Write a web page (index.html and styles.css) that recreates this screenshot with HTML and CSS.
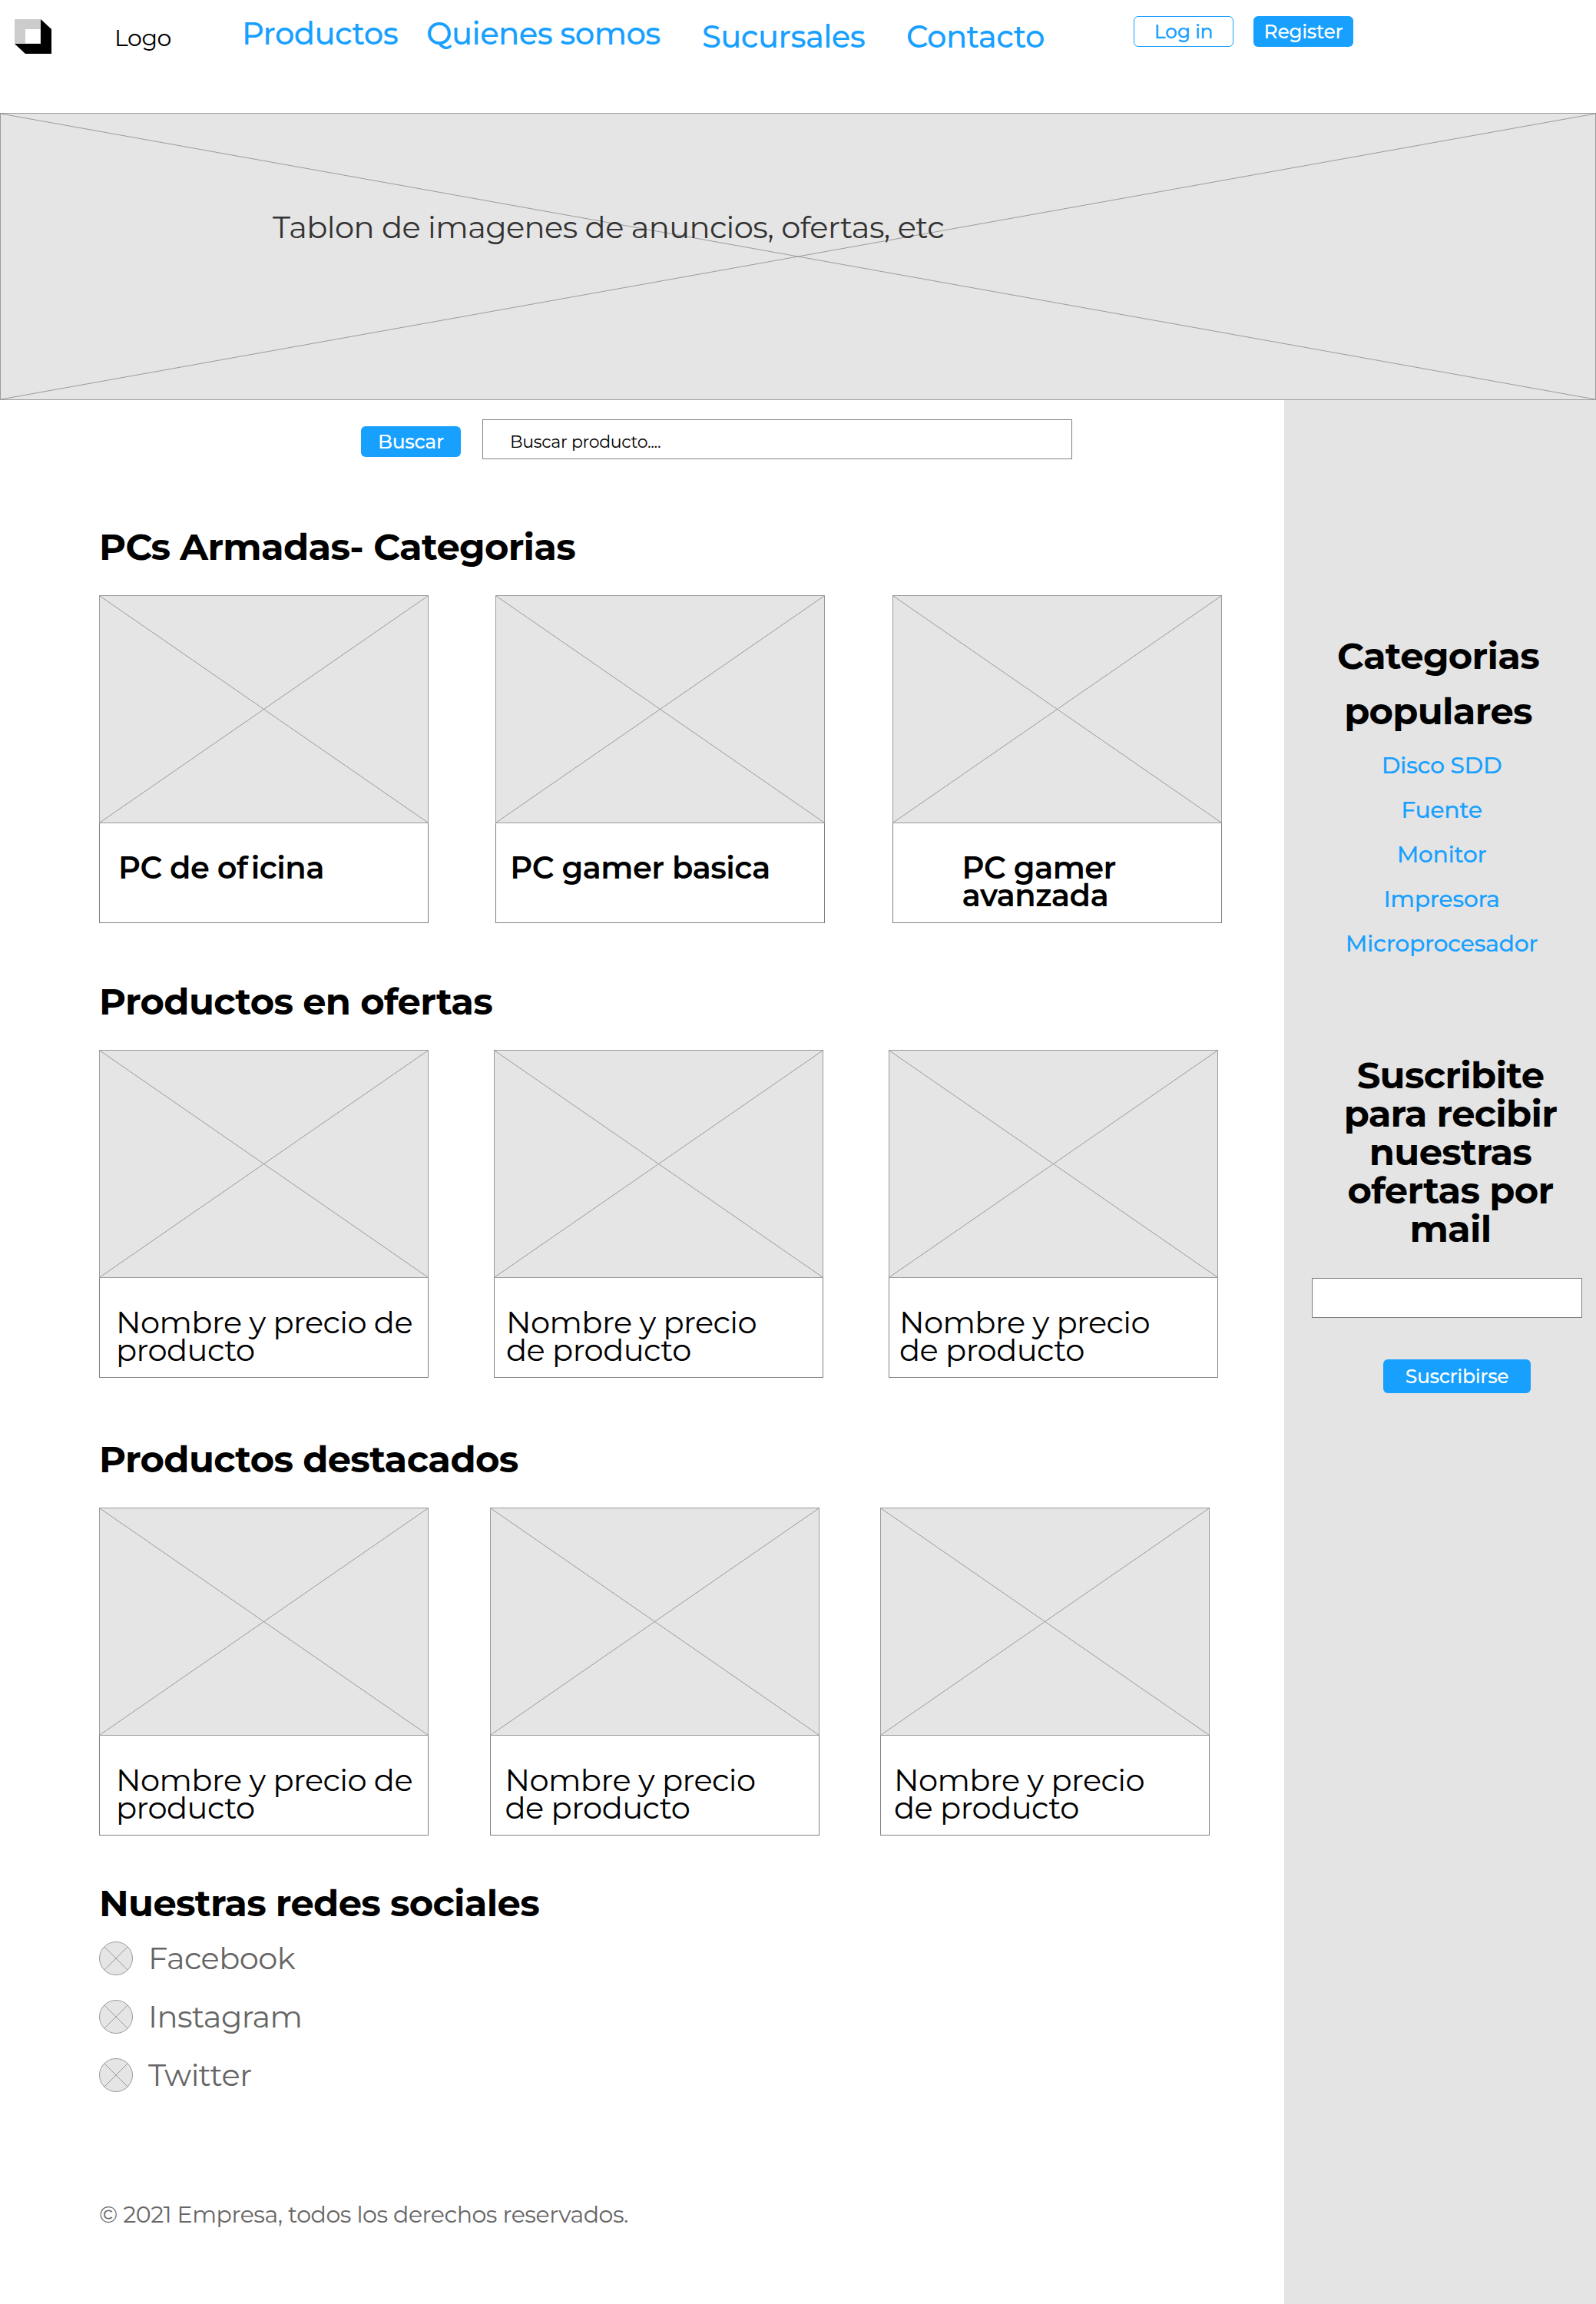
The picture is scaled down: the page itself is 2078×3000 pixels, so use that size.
FILE: index.html
```html
<!DOCTYPE html>
<html lang="es">
<head>
<meta charset="utf-8">
<title>Empresa</title>
<link rel="stylesheet" href="styles.css">
</head>
<body>
<svg class="defs" width="0" height="0" aria-hidden="true">
  <symbol id="cross" viewBox="0 0 100 100" preserveAspectRatio="none">
    <path d="M0 0L100 100M100 0L0 100" vector-effect="non-scaling-stroke"/>
  </symbol>
</svg>

<header class="header">
  <svg class="logo" viewBox="0 0 48 45" aria-hidden="true">
    <path fill="#000" d="M34 0L48 13V45H14L0 32H34Z"/>
    <path fill="#ccc" d="M0 0H34V32H0Z"/>
    <path fill="#fff" d="M14 13H33.5V31.5H14Z"/>
  </svg>
  <span class="brand">Logo</span>
  <nav class="nav">
    <a class="nav-link" href="#">Productos</a>
    <a class="nav-link" href="#">Quienes somos</a>
    <a class="nav-link nav-low" href="#">Sucursales</a>
    <a class="nav-link nav-low" href="#">Contacto</a>
  </nav>
  <a class="btn btn-outline" href="#">Log in</a>
  <a class="btn btn-register" href="#">Register</a>
</header>

<section class="banner">
  <svg class="cross"><use href="#cross"/></svg>
  <p class="banner-text">Tablon de imagenes de anuncios, ofertas, etc</p>
</section>

<div class="page">
  <main class="main">
    <form class="search">
      <button class="btn btn-search" type="button">Buscar</button>
      <div class="search-field">Buscar producto....</div>
    </form>

    <section class="section section-pcs">
      <h2 class="heading">PCs Armadas- Categorias</h2>
      <div class="cards">
        <article class="card"><svg class="card-img"><use href="#cross"/></svg><p class="caption strong">PC de o<span class="loose">f</span>icina</p></article>
        <article class="card"><svg class="card-img"><use href="#cross"/></svg><p class="caption strong">PC gamer basica</p></article>
        <article class="card"><svg class="card-img"><use href="#cross"/></svg><p class="caption strong">PC gamer<br>avanzada</p></article>
      </div>
    </section>

    <section class="section section-offers">
      <h2 class="heading">Productos en ofertas</h2>
      <div class="cards">
        <article class="card"><svg class="card-img"><use href="#cross"/></svg><p class="caption">Nombre y precio de<br>producto</p></article>
        <article class="card"><svg class="card-img"><use href="#cross"/></svg><p class="caption">Nombre y precio<br>de producto</p></article>
        <article class="card"><svg class="card-img"><use href="#cross"/></svg><p class="caption">Nombre y precio<br>de producto</p></article>
      </div>
    </section>

    <section class="section section-featured">
      <h2 class="heading">Productos destacados</h2>
      <div class="cards">
        <article class="card"><svg class="card-img"><use href="#cross"/></svg><p class="caption">Nombre y precio de<br>producto</p></article>
        <article class="card"><svg class="card-img"><use href="#cross"/></svg><p class="caption">Nombre y precio<br>de producto</p></article>
        <article class="card"><svg class="card-img"><use href="#cross"/></svg><p class="caption">Nombre y precio<br>de producto</p></article>
      </div>
    </section>

    <section class="section section-social">
      <h2 class="heading">Nuestras redes sociales</h2>
      <ul class="social">
        <li class="social-item">
          <svg class="social-icon" viewBox="0 0 44 44"><circle cx="22" cy="22" r="21.5"/><path d="M6.8 6.8L37.2 37.2M37.2 6.8L6.8 37.2"/></svg>
          <span>Facebook</span>
        </li>
        <li class="social-item">
          <svg class="social-icon" viewBox="0 0 44 44"><circle cx="22" cy="22" r="21.5"/><path d="M6.8 6.8L37.2 37.2M37.2 6.8L6.8 37.2"/></svg>
          <span>Instagram</span>
        </li>
        <li class="social-item">
          <svg class="social-icon" viewBox="0 0 44 44"><circle cx="22" cy="22" r="21.5"/><path d="M6.8 6.8L37.2 37.2M37.2 6.8L6.8 37.2"/></svg>
          <span>Twitter</span>
        </li>
      </ul>
    </section>

    <footer class="footer">© 2021 Empresa, todos los derechos reservados.</footer>
  </main>

  <aside class="sidebar">
    <h2 class="side-title">Categorias<br>populares</h2>
    <ul class="side-links">
      <li><a class="side-link" href="#">Disco SDD</a></li>
      <li><a class="side-link" href="#">Fuente</a></li>
      <li><a class="side-link" href="#">Monitor</a></li>
      <li><a class="side-link" href="#">Impresora</a></li>
      <li><a class="side-link" href="#">Microprocesador</a></li>
    </ul>
    <h2 class="subscribe-title">Suscribite<br>para recibir<br>nuestras<br>ofertas por<br>mail</h2>
    <input class="subscribe-input" type="text" aria-label="Mail">
    <button class="btn btn-subscribe" type="button">Suscribirse</button>
  </aside>
</div>
</body>
</html>
```
FILE: styles.css
```css
* {
  box-sizing: border-box;
  letter-spacing: -.014em;
}

body {
  margin: 0;
  width: 2078px;
  background: #fff;
  color: #000;
  font-family: Montserrat, Inter, "Open Sans", sans-serif;
  font-variant-ligatures: none;
}

h2, p, ul { margin: 0; padding: 0; }
ul { list-style: none; }
a { text-decoration: none; }

.defs { display: block; }

/* Header */
.header {
  display: flex;
  align-items: flex-start;
  height: 147px;
  padding-left: 19px;
}
.logo { width: 48px; height: 45px; margin-top: 25px; }
.brand {
  width: 166px;
  margin: 35px 0 0 82px;
  font-size: 30px;
  line-height: 30px;
}
.nav {
  display: grid;
  grid-template-columns: 240px 359px 266px 296px;
  align-items: start;
}
.nav-link {
  color: #18a0ff;
  font-size: 40px;
  font-weight: 500;
  line-height: 40px;
  margin-top: 24px;
}
.nav-low { margin-top: 27.5px; }

.btn {
  display: flex;
  align-items: center;
  justify-content: center;
  width: 130px;
  height: 40px;
  padding: 0;
  border: 0;
  border-radius: 6px;
  background: #18a0ff;
  color: #fff;
  font-family: inherit;
  font-size: 25px;
  font-weight: 500;
  line-height: 36px;
}
.btn-outline {
  margin-top: 21px;
  border: 1px solid #18a0ff;
  background: #fff;
  color: #18a0ff;
}
.btn-register { margin: 21px 0 0 26px; }

/* Banner */
.banner {
  display: grid;
  height: 374px;
  border: 1px solid #9b9b9b;
  background: #e5e5e5;
}
.cross, .banner-text { grid-area: 1 / 1; }
.cross { width: 100%; height: 372px; stroke: #9b9b9b; }
.banner-text {
  padding: 128px 0 0 354px;
  color: #333;
  font-size: 40px;
  line-height: 40px;
}

.page { display: flex; height: 2479px; }
.main { width: 1672px; padding: 25px 0 0 129px; }

/* Search */
.search {
  display: flex;
  gap: 28px;
  margin-left: 341px;
}
.btn-search { margin-top: 9px; }
.search-field {
  width: 768px;
  height: 52px;
  padding-left: 35px;
  border: 1px solid #808080;
  font-size: 22px;
  line-height: 58px;
}

/* Product sections */
.section-pcs { margin-top: 84px; }
.section-offers { margin-top: 72px; }
.section-featured { margin-top: 76px; }
.section-social { margin-top: 58px; }

.heading {
  font-size: 48px;
  font-weight: 700;
  line-height: 60px;
}

.cards { display: flex; margin-top: 33px; }
.section-pcs .cards { gap: 87.3px; }
.section-offers .cards { gap: 85px; }
.section-featured .cards { gap: 79.5px; }

.card { width: 429px; flex: none; }
.card-img {
  display: block;
  width: 429px;
  height: 297px;
  border: 1px solid #9b9b9b;
  background: #e5e5e5;
  stroke: #9b9b9b;
}
.caption {
  height: 130px;
  padding-top: 40px;
  border: 1px solid #808080;
  border-top: 0;
  font-size: 40px;
  line-height: 36px;
  white-space: nowrap;
}
.caption.strong { font-weight: 600; }
.loose { letter-spacing: 4px; }

.section-pcs .card:nth-child(1) .caption { padding-left: 24px; }
.section-pcs .card:nth-child(2) .caption { padding-left: 18px; }
.section-pcs .card:nth-child(3) .caption { padding-left: 90px; }
.section-offers .card:nth-child(1) .caption,
.section-featured .card:nth-child(1) .caption { padding-left: 21px; }
.section-offers .card:nth-child(2) .caption { padding-left: 15px; }
.section-offers .card:nth-child(3) .caption { padding-left: 13px; }
.section-featured .card:nth-child(2) .caption { padding-left: 19px; }
.section-featured .card:nth-child(3) .caption { padding-left: 17px; }

/* Social links */
.social { display: grid; gap: 32px; margin-top: 20px; }
.social-item {
  display: flex;
  height: 44px;
  color: #666;
  font-size: 40px;
  line-height: 44px;
}
.social-icon { width: 44px; height: 44px; margin-right: 20px; fill: #e5e5e5; stroke: #9b9b9b; }

.footer {
  margin-top: 140px;
  color: #666;
  font-size: 30px;
  line-height: 40px;
  letter-spacing: -.015em;
}

/* Sidebar */
.sidebar {
  width: 406px;
  padding-top: 297px;
  background: #e4e4e4;
}
.side-title, .subscribe-title {
  font-size: 48px;
  font-weight: 700;
  text-align: center;
}
.side-title { padding-right: 5px; line-height: 72px; }
.side-links { margin-top: 6px; padding-left: 4px; text-align: center; }
.side-link {
  display: block;
  color: #18a0ff;
  font-size: 30px;
  font-weight: 500;
  line-height: 58px;
}
.subscribe-title {
  margin-top: 117px;
  padding-left: 27px;
  line-height: 50px;
}
.subscribe-input {
  display: block;
  width: 352px;
  height: 52px;
  margin: 39px 0 0 36px;
  border: 1px solid #808080;
  background: #fff;
}
.btn-subscribe {
  width: 192px;
  height: 44px;
  margin: 54px 0 0 129px;
}
```
